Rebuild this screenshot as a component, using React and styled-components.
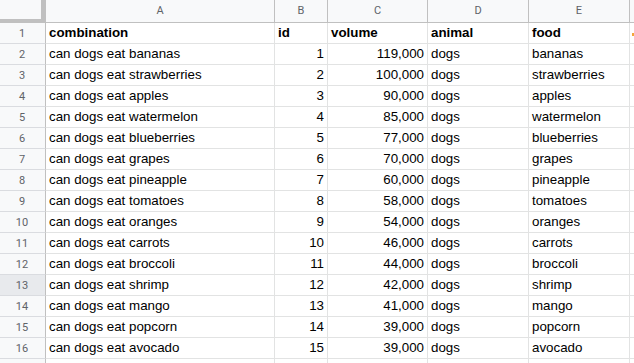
import React from "react"
import styled, { createGlobalStyle, css } from "styled-components"

const GlobalStyle = createGlobalStyle`
  html, body {
    margin: 0;
    padding: 0;
    background: #fff;
    overflow: hidden;
  }
`

const rows = [
  ["bananas", 1, "119,000"],
  ["strawberries", 2, "100,000"],
  ["apples", 3, "90,000"],
  ["watermelon", 4, "85,000"],
  ["blueberries", 5, "77,000"],
  ["grapes", 6, "70,000"],
  ["pineapple", 7, "60,000"],
  ["tomatoes", 8, "58,000"],
  ["oranges", 9, "54,000"],
  ["carrots", 10, "46,000"],
  ["broccoli", 11, "44,000"],
  ["shrimp", 12, "42,000"],
  ["mango", 13, "41,000"],
  ["popcorn", 14, "39,000"],
  ["avocado", 15, "39,000"],
]

const columns = ["A", "B", "C", "D", "E", "F"]

// row header, A..E, then column F which runs off the right edge
const Grid = styled.div`
  display: grid;
  grid-template-columns: 46px 229px 53px 100px 101px 101px 101px;
  grid-template-rows: 23px;
  grid-auto-rows: 21px;
  width: 634px;
  height: 363px;
  overflow: hidden;
  font-family: "Liberation Sans", Arial, sans-serif;
`

const Corner = styled.div`
  box-sizing: border-box;
  background: #f8f9fa;
  border-right: 5px solid #c0c0c0;
  border-bottom: 4px solid #c0c0c0;
`

const ColHeader = styled.div`
  box-sizing: border-box;
  background: #f8f9fa;
  border-right: 1px solid #c0c0c0;
  border-bottom: 1px solid #c0c0c0;
  color: #5f6368;
  font-family: Roboto, "Liberation Sans", sans-serif;
  font-size: 11px;
  display: flex;
  align-items: center;
  justify-content: center;
  padding-bottom: 1px;
`

const RowHeader = styled.div`
  box-sizing: border-box;
  background: ${(p) => (p.$active ? "#e8eaed" : "#f8f9fa")};
  border-right: 1px solid #c0c0c0;
  border-bottom: 1px solid #dadce0;
  color: #5f6368;
  font-family: Roboto, "Liberation Sans", sans-serif;
  font-size: 11px;
  display: flex;
  align-items: center;
  justify-content: center;
  padding-right: 1px;
`

const Cell = styled.div`
  box-sizing: border-box;
  border-right: 1px solid #e2e3e3;
  border-bottom: 1px solid #e2e3e3;
  color: #000;
  font-size: 10pt;
  line-height: 20px;
  padding: 0 3px;
  white-space: nowrap;
  overflow: hidden;
  text-align: ${(p) => (p.$num ? "right" : "left")};
  ${(p) =>
    p.$bold &&
    css`
      font-weight: bold;
    `}
`

const EdgeCell = styled(Cell)`
  position: relative;
  ${(p) =>
    p.$mark &&
    css`
      &::before {
        content: "";
        position: absolute;
        left: 2px;
        top: 10px;
        width: 2px;
        height: 3px;
        background: #f4a63a;
      }
    `}
`

export default function App() {
  return (
    <>
      <GlobalStyle />
      <Grid>
        <Corner />
        {columns.map((c) => (
          <ColHeader key={c}>{c}</ColHeader>
        ))}

        <RowHeader>1</RowHeader>
        <Cell $bold>combination</Cell>
        <Cell $bold>id</Cell>
        <Cell $bold>volume</Cell>
        <Cell $bold>animal</Cell>
        <Cell $bold>food</Cell>
        <EdgeCell $mark />

        {rows.map(([food, id, volume], i) => (
          <React.Fragment key={food}>
            <RowHeader $active={i + 2 === 13}>{i + 2}</RowHeader>
            <Cell>can dogs eat {food}</Cell>
            <Cell $num>{id}</Cell>
            <Cell $num>{volume}</Cell>
            <Cell>dogs</Cell>
            <Cell>{food}</Cell>
            <EdgeCell />
          </React.Fragment>
        ))}

        <RowHeader>17</RowHeader>
        <Cell />
        <Cell />
        <Cell />
        <Cell />
        <Cell />
        <EdgeCell />
      </Grid>
    </>
  )
}
